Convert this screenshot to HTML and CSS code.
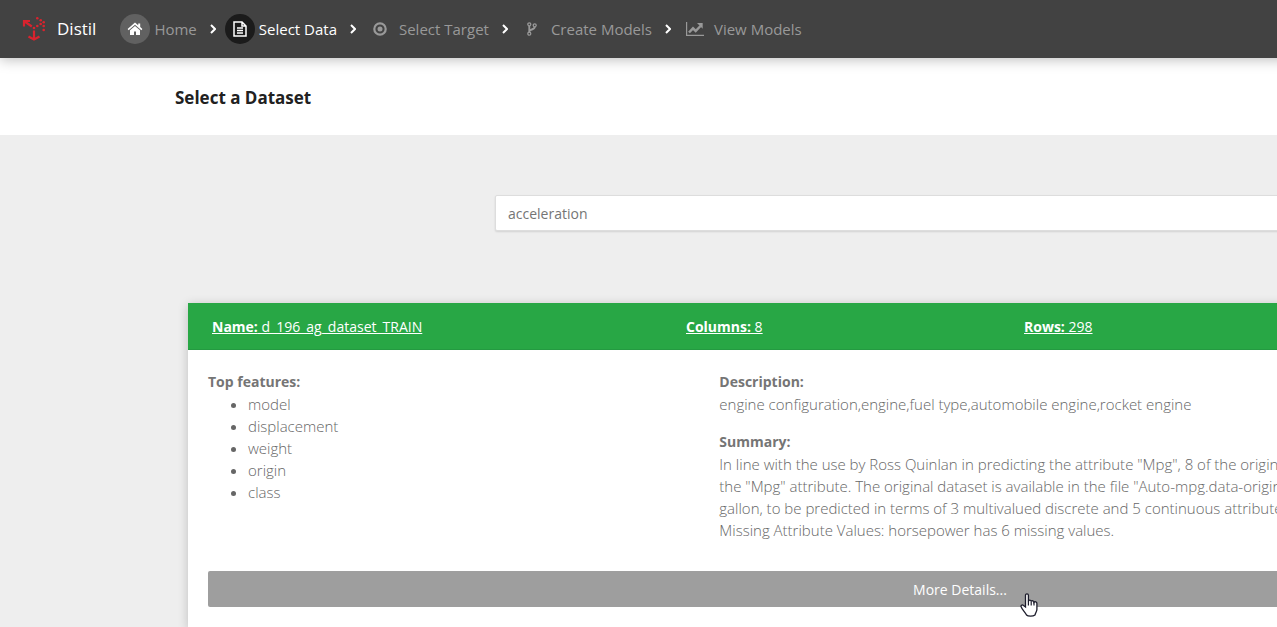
FILE: index.html
```html
<!DOCTYPE html>
<html lang="en">
<head>
<meta charset="utf-8">
<title>Distil</title>
<link rel="stylesheet" href="styles.css">
</head>
<body>
<div class="page">
  <header class="navbar">
    <a class="brand" href="#">
      <svg class="logo" viewBox="0 0 24 26" width="24" height="26" aria-hidden="true">
        <g fill="none" stroke="#d9232e" stroke-width="2.200">
          <path d="M2 10.500V5H8M2 5L9.800 10.500"/>
          <path d="M12 14.500V23M6.500 20.500L12 23.500L17.500 20.500"/>
        </g>
        <g fill="#d9232e">
          <circle cx="12" cy="12" r="1.300"/><circle cx="15.300" cy="2.300" r="1.300"/><circle cx="18.700" cy="4.300" r="1.300"/><circle cx="21.700" cy="6.300" r="1.300"/><circle cx="15.300" cy="10" r="1.300"/><circle cx="18.700" cy="8" r="1.300"/><circle cx="21.700" cy="10" r="1.300"/><circle cx="21.700" cy="14" r="1.300"/>
        </g>
      </svg>
      <span>Distil</span>
    </a>
    <nav class="steps" aria-label="Steps">
      <a class="step home" href="#"><span class="badge"><svg viewBox="0 0 16 14" width="16" height="14" fill="#fff"><path d="M8 .500L.600 7l1 1.200L8 2.800l6.400 5.400 1-1.200-2.200-2V1.500h-2v1.800z"/><path d="M8 4L3 8.200V13h4V9.500h2V13h4V8.200z"/></svg></span><span>Home</span></a>
      <svg class="chevron" viewBox="0 0 6 10" width="6" height="10"><path d="M1 1l4 4-4 4"/></svg>
      <a class="step current" href="#" aria-current="step"><span class="badge"><svg viewBox="0 0 14 16" width="14" height="16" fill="none" stroke="#fff" stroke-width="1.500"><path d="M1 1h8l4 4v10H1zM9 1v4h4M4 7h6M4 9.500h6M4 12h6"/></svg></span><span>Select Data</span></a>
      <svg class="chevron" viewBox="0 0 6 10" width="6" height="10"><path d="M1 1l4 4-4 4"/></svg>
      <a class="step" href="#"><span class="badge"><svg viewBox="0 0 14 14" width="14" height="14"><circle cx="7" cy="7" r="5.700" fill="none" stroke="#999" stroke-width="2.200"/><circle cx="7" cy="7" r="2.500" fill="#999"/></svg></span><span>Select Target</span></a>
      <svg class="chevron" viewBox="0 0 6 10" width="6" height="10"><path d="M1 1l4 4-4 4"/></svg>
      <a class="step" href="#"><span class="badge"><svg viewBox="0 0 10 14" width="10" height="14" fill="none" stroke="#999"><g stroke-width="1.300"><circle cx="2.300" cy="2.300" r="1.500"/><circle cx="7.700" cy="3.300" r="1.500"/><circle cx="2.300" cy="11.700" r="1.500"/></g><path stroke-width="1.900" d="M2.300 4v6.500M7.700 5c0 3-5.400 2-5.400 4.500"/></svg></span><span>Create Models</span></a>
      <svg class="chevron" viewBox="0 0 6 10" width="6" height="10"><path d="M1 1l4 4-4 4"/></svg>
      <a class="step" href="#"><span class="badge"><svg viewBox="0 0 18 14" width="18" height="14"><path d="M.6 0v13.400H18" fill="none" stroke="#999" stroke-width="1.200"/><path d="M3 10.500l4-4.200 2.700 2.700L14.500 4" fill="none" stroke="#999" stroke-width="2.500"/><path d="M11 1H16.700V6.700z" fill="#999"/></svg></span><span>View Models</span></a>
    </nav>
  </header>

  <section class="heading"><h1>Select a Dataset</h1></section>

  <main>
    <div class="search">
      <input type="text" value="acceleration" aria-label="Search datasets">
    </div>
    <article class="card">
      <a class="card-head" href="#">
        <span><b>Name:</b> d_196_ag_dataset_TRAIN</span>
        <span><b>Columns:</b> 8</span>
        <span><b>Rows:</b> 298</span>
      </a>
      <div class="card-body">
        <div class="columns">
          <section>
            <h2>Top features:</h2>
            <ul>
              <li>model</li>
              <li>displacement</li>
              <li>weight</li>
              <li>origin</li>
              <li>class</li>
            </ul>
          </section>
          <section>
            <h2>Description:</h2>
            <p>engine configuration,engine,fuel type,automobile engine,rocket engine</p>
            <h2>Summary:</h2>
            <p>In line with the use by Ross Quinlan in predicting the attribute "Mpg", 8 of the original instances were removed for<br>
            the "Mpg" attribute. The original dataset is available in the file "Auto-mpg.data-original". Consumption in miles per<br>
            gallon, to be predicted in terms of 3 multivalued discrete and 5 continuous attributes.<br>
            Missing Attribute Values: horsepower has 6 missing values.</p>
          </section>
        </div>
        <div class="action">
          <button type="button">More Details...</button>
          <svg class="pointer" viewBox="0 0 18 24" width="18" height="24" aria-hidden="true"><path d="M5.500 14V2.300C5.500.4 8.400.4 8.400 2.300V8.300C8.800 6.500 11.200 6.800 11.200 8.600C11.800 7.200 14 7.600 14 9.200C14.800 8.300 16.900 8.700 16.900 10.500V16.500C16.900 18.500 15.500 19.500 15 22C13 23.500 8 23.500 6.500 22C5.500 19.500 2 16.500 1 13.500C.8 11.800 2.500 11.600 3.500 12.500z" fill="#fff" stroke="#1c1c2b" stroke-width="1.300"/><path d="M8.400 8v4.500M11.200 8.500v4M14 9v3.500" stroke="#1c1c2b" stroke-width="1.200"/></svg>
        </div>
      </div>
    </article>
  </main>
</div>
</body>
</html>
```
FILE: styles.css
```css
* { box-sizing: border-box; }

html { overflow: hidden; }

body {
  margin: 0;
  background: #eee;
  color: #757575;
  font: 14px/22px "Segoe UI", "Open Sans", sans-serif;
}

h1, h2, p, ul { margin: 0; }

.page { min-width: 1920px; }

.navbar {
  position: relative;
  display: flex;
  align-items: center;
  height: 58px;
  padding: 0 22px;
  gap: 24px;
  background: #424242;
  box-shadow: 0 2px 12px rgba(0, 0, 0, .25);
}

.brand {
  display: flex;
  align-items: center;
  gap: 11px;
  color: #fff;
  font-size: 17px;
  text-decoration: none;
}

.steps { display: flex; align-items: center; }

.step {
  display: flex;
  align-items: center;
  gap: 4px;
  color: #999;
  font-size: 15px;
  text-decoration: none;
}

.badge {
  display: flex;
  align-items: center;
  justify-content: center;
  width: 30px;
  height: 30px;
  border-radius: 50%;
}

.home .badge { background: #616161; }
.current { color: #fff; }
.current .badge { background: #1b1b1b; }

.chevron {
  margin: 0 9px 0 13px;
  fill: none;
  stroke: #fff;
  stroke-width: 2;
}

.heading {
  padding: 29px 175px 26px;
  background: #fff;
  color: #212121;
}

.heading h1 { font-size: 17px; font-weight: 700; line-height: 22px; }

.search { width: 50%; margin: 60px auto 72px; padding: 0 15px; }

.search input {
  display: block;
  width: 100%;
  height: 36px;
  padding: 0 12px;
  border: 1px solid #ddd;
  border-radius: 2px;
  background: #fff;
  box-shadow: 0 1px 2px rgba(0, 0, 0, .12);
  color: #757575;
  font: inherit;
}

.card {
  margin: 0 188px;
  background: #fff;
  box-shadow: 0 2px 10px rgba(0, 0, 0, .2);
}

.card-head {
  display: grid;
  grid-template-columns: 474px 338px 1fr;
  padding: 13px 24px 11px;
  border-bottom: 1px solid #249a41;
  background: #28a745;
  color: #fff;
}

.card-body { padding: 21px 20px; }

.columns {
  display: grid;
  grid-template-columns: 1fr 2fr;
  column-gap: 15px;
  color: #666;
  font-size: 15px;
  font-weight: 300;
}

.columns h2 { color: #757575; font-size: 14px; font-weight: 700; line-height: 22px; }
.columns ul { padding-left: 40px; }
.columns p { margin-bottom: 16px; white-space: nowrap; }

.action { position: relative; margin-top: 14px; }

.action button {
  display: block;
  width: 100%;
  height: 36px;
  padding: 2px 0 0;
  border: 0;
  border-radius: 2px;
  background: #9e9e9e;
  color: #fff;
  font: inherit;
}

.pointer {
  position: absolute;
  top: 22px;
  left: calc(50% + 60px);
}
```
